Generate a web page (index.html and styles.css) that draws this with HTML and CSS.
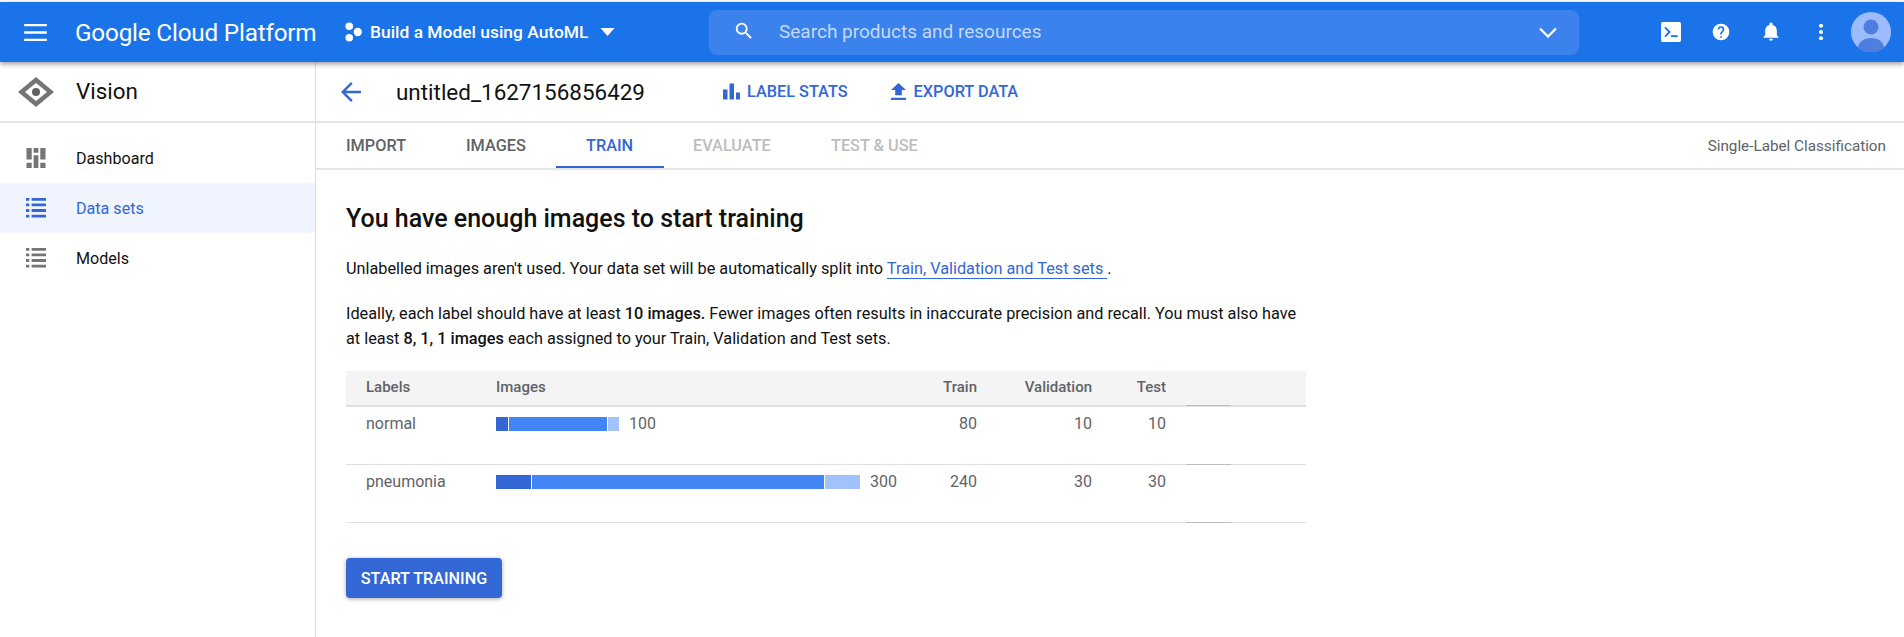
FILE: index.html
```html
<!DOCTYPE html>
<html lang="en">
<head>
<meta charset="utf-8">
<title>Vision - Train</title>
<link rel="stylesheet" href="styles.css">
</head>
<body>
<div class="page">
  <header class="topbar">
    <svg class="ic-menu" viewBox="0 0 24 18"><path d="M0 0h24v2.400H0zM0 7.800h24v2.400H0zM0 15.600h24V18H0z"/></svg>
    <div class="brand">Google Cloud Platform</div>
    <div class="project">
      <svg class="ic-project" viewBox="0 0 18 20"><circle cx="4.500" cy="4" r="4"/><circle cx="4.500" cy="16" r="4"/><circle cx="13.500" cy="10" r="4.400"/></svg>
      <span class="project-name">Build a Model using AutoML</span>
      <svg class="ic-caret" viewBox="0 0 14 8"><path d="M0 0h14L7 8z"/></svg>
    </div>
    <div class="search">
      <svg class="ic-search" viewBox="0 0 24 24"><path d="M15.500 14h-.79l-.28-.27A6.470 6.470 0 0 0 16 9.500 6.500 6.500 0 1 0 9.500 16c1.610 0 3.090-.59 4.230-1.570l.27.28v.79l5 4.990L20.490 19l-4.990-5zm-6 0C7.010 14 5 11.990 5 9.500S7.010 5 9.500 5 14 7.010 14 9.500 11.990 14 9.500 14z"/></svg>
      <span class="search-text">Search products and resources</span>
      <svg class="ic-chevron" viewBox="0 0 18 11"><path d="M1 1.500l8 8 8-8" fill="none" stroke="#fff" stroke-width="2.200"/></svg>
    </div>
    <div class="actions">
      <span class="action"><svg viewBox="0 0 18 18"><path fill-rule="evenodd" d="M1.500 0h15A1.500 1.500 0 0 1 18 1.500v15a1.500 1.500 0 0 1-1.500 1.500h-15A1.500 1.500 0 0 1 0 16.500v-15A1.500 1.500 0 0 1 1.500 0zM3 5.500l3.500 3.500L3 12.500 4.200 13.700 8.900 9 4.200 4.300zM9 12v1.500h6V12z"/></svg></span>
      <span class="action"><svg viewBox="0 0 24 24"><path d="M12 2a10 10 0 1 0 0 20 10 10 0 0 0 0-20zm1 17h-2v-2h2v2zm2.070-7.750l-.9.920C13.450 12.900 13 13.500 13 15h-2v-.5c0-1.100.45-2.100 1.170-2.830l1.240-1.260A2 2 0 1 0 10 9H8a4 4 0 1 1 8 0c0 .88-.36 1.680-.93 2.250z"/></svg></span>
      <span class="action"><svg viewBox="0 0 24 24"><path d="M12 22.500a2.300 2.300 0 0 0 2.300-2.300H9.700a2.300 2.300 0 0 0 2.300 2.300zM19 16v-5.500c0-3.400-1.800-6.200-5-7V2.700a2 2 0 0 0-4 0v.8c-3.200.8-5 3.600-5 7V16l-2 2v1h18v-1z"/></svg></span>
      <span class="action"><svg viewBox="0 0 24 24"><circle cx="12" cy="4.500" r="2.500"/><circle cx="12" cy="12" r="2.500"/><circle cx="12" cy="19.500" r="2.500"/></svg></span>
      <span class="avatar"><svg viewBox="0 0 40 40"><circle cx="20" cy="20" r="20" fill="#9dbcff"/><circle cx="20" cy="15" r="7.500" fill="#4f7de0"/><path d="M7 36c0-6 6-10 13-10s13 4 13 10a20 20 0 0 1-26 0z" fill="#4f7de0"/></svg></span>
    </div>
  </header>
  <div class="body">
    <aside class="sidebar">
      <div class="product">
        <svg class="ic-vision" viewBox="0 0 36 30"><path d="M18 0l18 15-18 15L0 15z" fill="#757575"/><path d="M18 6l11 9-11 9L7 15z" fill="#fff"/><circle cx="18" cy="15" r="4" fill="#616161"/></svg>
        <span class="product-name">Vision</span>
      </div>
      <nav class="nav">
        <a class="nav-item">
          <svg class="nav-icon" viewBox="0 0 20 21"><path d="M0 0h5.500v12H0zM7.500 0h5v5h-5zM14.500 0H20v12h-5.500zM7.500 7.500h5V21h-5zM0 15.500h5.500V21H0zM14.500 15.500H20V21h-5.500z"/></svg>
          <span>Dashboard</span>
        </a>
        <a class="nav-item active">
          <svg class="nav-icon" viewBox="0 0 18 18"><path d="M0 0h3v2.500H0zM5 0h13v2.500H5zM0 5h3v2.500H0zM5 5h13v2.500H5zM0 10h3v2.500H0zM5 10h13v2.500H5zM0 15h3v2.500H0zM5 15h13v2.500H5z"/></svg>
          <span>Data sets</span>
        </a>
        <a class="nav-item">
          <svg class="nav-icon" viewBox="0 0 18 18"><path d="M0 0h3v2.500H0zM5 0h13v2.500H5zM0 5h3v2.500H0zM5 5h13v2.500H5zM0 10h3v2.500H0zM5 10h13v2.500H5zM0 15h3v2.500H0zM5 15h13v2.500H5z"/></svg>
          <span>Models</span>
        </a>
      </nav>
    </aside>
    <main class="main">
      <div class="titlebar">
        <svg class="ic-back" viewBox="0 0 20 20"><path d="M20 8.800H4.700l7-7L10 0 0 10l10 10 1.700-1.800-7-7H20z"/></svg>
        <h1 class="dataset">untitled_1627156856429</h1>
        <a class="tool tool-stats">
          <svg viewBox="0 0 17 16"><path d="M0 6h4.500v10H0zM6.500 0H11v16H6.500zM13 9h4v7h-4z"/></svg>
          LABEL STATS
        </a>
        <a class="tool">
          <svg viewBox="0 0 16 18"><path d="M4.500 13h7V7.500H16L8 0 0 7.500h4.500zM0 15.500h16V18H0z"/></svg>
          EXPORT DATA
        </a>
      </div>
      <div class="tabs">
        <a class="tab">IMPORT</a>
        <a class="tab">IMAGES</a>
        <a class="tab selected">TRAIN</a>
        <a class="tab disabled">EVALUATE</a>
        <a class="tab disabled">TEST &amp; USE</a>
        <span class="model-type">Single-Label Classification</span>
      </div>
      <section class="content">
        <h2 class="heading">You have enough images to start training</h2>
        <p class="para first">Unlabelled images aren't used. Your data set will be automatically split into <a class="link">Train, Validation and Test sets </a>.</p>
        <p class="para second">Ideally, each label should have at least <b>10 images.</b> Fewer images often results in inaccurate precision and recall. You must also have at least <b>8, 1, 1 images</b> each assigned to your Train, Validation and Test sets.</p>
        <div class="table">
          <div class="row head">
            <span class="c-label">Labels</span><span>Images</span><span class="num">Train</span><span class="num">Validation</span><span class="num">Test</span><i class="mark"></i>
          </div>
          <div class="row">
            <span class="c-label">normal</span>
            <span class="bar-cell">
              <span class="bar b-dark w12"></span><span class="bar b-mid w98"></span><span class="bar b-light w12"></span><span class="count">100</span>
            </span>
            <span class="num">80</span><span class="num">10</span><span class="num">10</span><i class="mark"></i>
          </div>
          <div class="row">
            <span class="c-label">pneumonia</span>
            <span class="bar-cell">
              <span class="bar b-dark w35"></span><span class="bar b-mid w292"></span><span class="bar b-light w35"></span><span class="count">300</span>
            </span>
            <span class="num">240</span><span class="num">30</span><span class="num">30</span><i class="mark"></i>
          </div>
        </div>
        <button class="start">START TRAINING</button>
      </section>
    </main>
  </div>
</div>
</body>
</html>
```
FILE: styles.css
```css
* { box-sizing: border-box; }
html, body { margin: 0; height: 100%; }
body { font-family: Roboto, "Liberation Sans", sans-serif; color: #111; background: #fff; overflow: hidden; }
.page { height: 637px; display: flex; flex-direction: column; padding-top: 2px; overflow: hidden; }

.topbar { height: 60px; flex: none; background: #1a73e8; color: #fff; display: flex; align-items: center; box-shadow: 0 2px 5px rgba(0,0,0,.4); position: relative; z-index: 2; }
.topbar svg { fill: #fff; display: block; }
.ic-menu { width: 23px; height: 17px; margin-left: 24px; }
.brand { font-size: 24.3px; margin-left: 28px; width: 270px; letter-spacing: -.2px; }
.project { display: flex; align-items: center; width: 364px; }
.ic-project { width: 17px; height: 20px; }
.project-name { font-size: 17.4px; font-weight: 500; margin-left: 8px; width: 230px; white-space: nowrap; }
.ic-caret { width: 15px; height: 8px; }
.search { width: 870px; height: 45px; background: #3b82ec; border-radius: 8px; display: flex; align-items: center; padding: 0 22px 0 24px; }
.ic-search { width: 22px; height: 22px; flex: none; margin-top: -2px; }
.search-text { font-size: 19px; color: #c4d9f8; margin-left: 24px; flex: 1; margin-top: -2px; }
.ic-chevron { width: 18px; height: 11px; }
.actions { display: flex; align-items: center; margin-left: 67px; }
.action { width: 50px; height: 40px; display: flex; align-items: center; justify-content: center; }
.action svg { width: 20px; height: 20px; }
.avatar { margin-left: 5px; width: 40px; height: 40px; }

.body { flex: 1; display: flex; min-height: 0; }
.sidebar { width: 316px; flex: none; border-right: 1px solid #e0e0e0; }
.product { height: 61px; display: flex; align-items: center; border-bottom: 2px solid #e4e4e4; padding-left: 18px; }
.ic-vision { width: 36px; height: 30px; }
.product-name { font-size: 22.4px; margin-left: 22px; margin-top: -2px; color: #111; }
.nav { padding-top: 10px; }
.nav-item { height: 50px; display: flex; align-items: center; font-size: 16.1px; color: #111; padding-left: 26px; fill: #757575; }
.nav-icon { width: 20px; height: 20px; flex: none; margin-right: 30px; }
.nav-item.active { background: #f0f4fe; color: #3367d6; fill: #3367d6; }

.main { flex: 1; min-width: 0; }
.titlebar { height: 61px; display: flex; align-items: center; border-bottom: 2px solid #e4e4e4; padding-left: 25px; }
.ic-back { width: 20px; height: 20px; fill: #3367d6; flex: none; }
.dataset { font-size: 22.45px; font-weight: 400; margin: 0 0 0 35px; width: 327px; color: #111; }
.tool { display: flex; align-items: center; font-size: 16.3px; font-weight: 500; color: #3367d6; fill: #3367d6; margin-right: 42px; }
.tool svg { width: 17px; height: 17px; margin-right: 7px; }
.tabs { height: 47px; display: flex; align-items: stretch; border-bottom: 2px solid #e4e4e4; padding-left: 30px; padding-right: 18px; }
.tab { font-size: 16.3px; font-weight: 500; color: #5f6368; width: 120px; flex: none; display: flex; align-items: center; }
.tab.selected { color: #3367d6; box-shadow: inset 0 -2px 0 #3367d6; width: 108px; margin-left: -30px; padding-left: 30px; margin-right: 29px; }
.tab.disabled { color: #bdbdbd; }
.tab.disabled + .tab.disabled { margin-left: 18px; }
.model-type { margin-left: auto; align-self: center; font-size: 15.25px; color: #5f6368; }

.content { padding: 0 30px; }
.heading { font-size: 25px; font-weight: 500; margin: 32px 0 0; line-height: 34px; color: #111; }
.para { font-size: 16.28px; line-height: 25px; margin: 0; width: 960px; color: #111; }
.para b { font-weight: 500; }
.first { margin-top: 20px; }
.second { margin-top: 20px; }
.link { color: #3367d6; border-bottom: 1px solid #3367d6; }

.table { width: 960px; margin-top: 20px; font-size: 16px; color: #5f6368; }
.row { display: grid; grid-template-columns: 150px 400px 81px 115px 74px 140px; height: 58px; border-bottom: 1px solid #e0e0e0; padding-top: 7px; line-height: 20px; }
.row.head { height: 36px; background: #f4f4f4; font-size: 15px; font-weight: 500; padding-top: 6px; border-bottom-width: 2px; }
.c-label { padding-left: 20px; }
.num { text-align: right; }
.mark { display: block; height: 1px; background: #bdbdbd; align-self: end; margin: 0 75px -1px 20px; }
.bar-cell { display: flex; align-items: center; height: 20px; }
.bar { display: block; flex: none; height: 14px; margin-right: 1px; }
.b-dark { background: #3367d6; }
.b-mid { background: #4285f4; }
.b-light { background: #a1c2fa; }
.w12 { width: 11.500px; }
.w98 { width: 98px; }
.w35 { width: 35px; }
.w292 { width: 292px; }
.count { margin-left: 9px; }

.start { display: block; margin-top: 35px; width: 156px; height: 40px; border: 0; border-radius: 4px; background: #3367d6; color: #fff; font: 500 16.2px Roboto, sans-serif; box-shadow: 0 1px 4px rgba(0,0,0,.35); padding: 0; }
```
